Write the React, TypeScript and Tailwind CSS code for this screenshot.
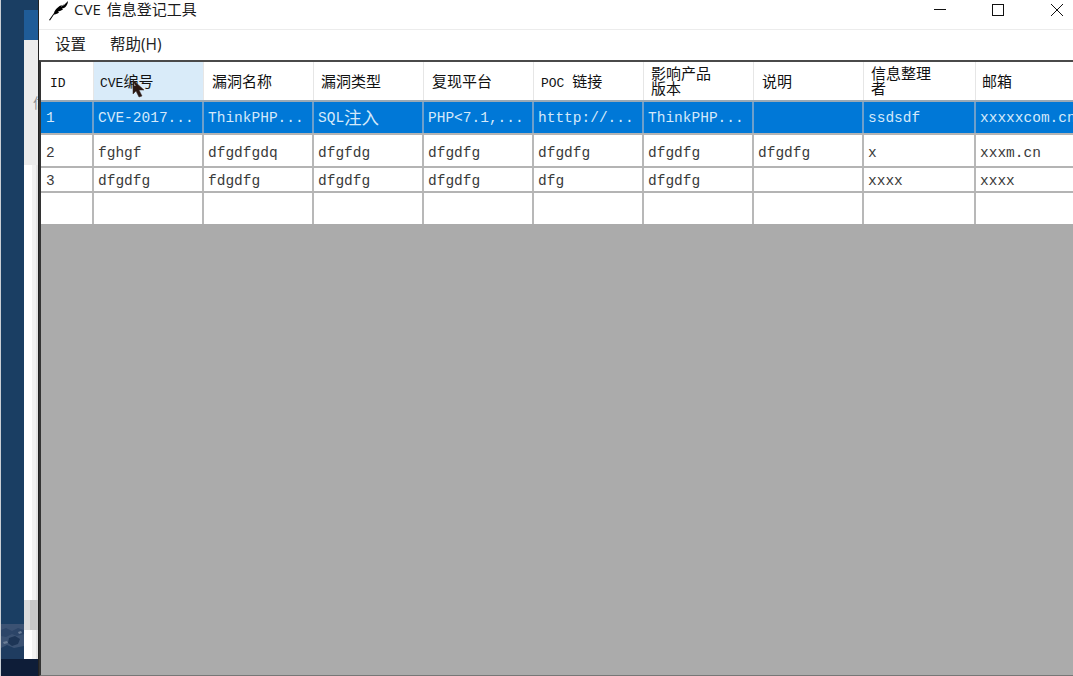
const MONO = "font-['Liberation_Mono','Noto_Sans_CJK_SC',monospace]";
const UI = "font-['Open_Sans','Noto_Sans_CJK_SC',sans-serif]";
const COLS = "grid grid-cols-[53px_repeat(7,110px)_112px_110px]";

// header cells: latin part is narrow mono, cjk part is larger
const HEADERS: { latin?: string; lines: string[]; pad: string }[] = [
  { latin: "ID", lines: [], pad: "pl-[9px]" },
  { latin: "CVE", lines: ["编号"], pad: "pl-[6px]" },
  { lines: ["漏洞名称"], pad: "pl-[8px]" },
  { lines: ["漏洞类型"], pad: "pl-[7px]" },
  { lines: ["复现平台"], pad: "pl-[8px]" },
  { latin: "POC ", lines: ["链接"], pad: "pl-[7px]" },
  { lines: ["影响产品", "版本"], pad: "pl-[7px]" },
  { lines: ["说明"], pad: "pl-[8px]" },
  { lines: ["信息整理", "者"], pad: "pl-[7px]" },
  { lines: ["邮箱"], pad: "pl-[6px]" },
];

const ROWS: { height: string; pad: string; cells: string[] }[] = [
  {
    height: "h-[33px]",
    pad: "pt-[3px]",
    cells: ["1", "CVE-2017...", "ThinkPHP...", "SQL注入", "PHP<7.1,...", "htttp://...", "ThinkPHP...", "", "ssdsdf", "xxxxxcom.cn"],
  },
  {
    height: "h-[33px]",
    pad: "pt-[6px]",
    cells: ["2", "fghgf", "dfgdfgdq", "dfgfdg", "dfgdfg", "dfgdfg", "dfgdfg", "dfgdfg", "x", "xxxm.cn"],
  },
  {
    height: "h-[25px]",
    pad: "pt-[5px]",
    cells: ["3", "dfgdfg", "fdgdfg", "dfgdfg", "dfgdfg", "dfg", "dfgdfg", "", "xxxx", "xxxx"],
  },
  { height: "h-[33px]", pad: "", cells: ["", "", "", "", "", "", "", "", "", ""] },
];

function BackgroundStrip() {
  return (
    <div className="flex h-full w-[38px] shrink-0 border-l border-[#c9ced4] bg-[#1a3f66]">
      <div className="w-[23px] flex flex-col">
        <div className="h-[624px] bg-[#1a3e63]" />
        <svg width="23" height="35" viewBox="0 0 23 35" className="block">
          <rect width="23" height="35" fill="#3b5273" />
          <path d="M0 6l5-2 6 3 6-3 6 2v4l-7 2-5-2-6 3-5-1z" fill="#2c4568" />
          <path d="M8 14l6-2 5 3-2 5-6 2-4-3z" fill="#1d3556" />
          <path d="M0 24l6-3 7 3 10-2v13H0z" fill="#1f3c60" />
          <path d="M2 18l4-1 1 2-4 1zM17 8l3-1 1 2-3 1z" fill="#6b7d96" />
        </svg>
        <div className="flex-1 bg-[#0e1d38]" />
      </div>
      <div className="flex w-[14px] flex-col">
        <div className="h-[10px] bg-[#1a3e63]" />
        <div className="h-[30px] bg-[#1f5c98]" />
        <div className="flex h-[125px] items-center overflow-hidden bg-[#ececec] pl-[9px]">
          <span className={`${UI} text-[14px] text-[#8a8f94]`}>信</span>
        </div>
        <div className="flex h-[435px] bg-white">
          <div className="w-[8px]" />
          <div className="w-[4px] bg-[#f2f2f2]" />
          <div className="w-[2px] bg-[#e3e3e3]" />
        </div>
        <div className="flex h-[30px]">
          <div className="w-[6px] bg-[#dcdcdc]" />
          <div className="w-[8px] bg-[#c8c8c8]" />
        </div>
        <div className="flex h-[29px] bg-white">
          <div className="w-[8px]" />
          <div className="w-[4px] bg-[#f2f2f2]" />
          <div className="w-[2px] bg-[#e3e3e3]" />
        </div>
        <div className="flex-1 bg-[#0e1d38]" />
      </div>
    </div>
  );
}

function TitleBar() {
  return (
    <div className="flex h-[30px] shrink-0 border-b border-[#ececec] bg-white">
      <svg width="20" height="20" viewBox="0 0 20 20" className="ml-[10px] mt-px block">
        <path d="M0 19L5 12C6 8 10 5 13 4L12 6 15 3 14 5 19 0C19 3 17 6 15 7L13 7.5 14 8.5 11 10 9 10.5 10 11.5C8 13 6 13.5 5 13.5L1 19.5z" fill="#000" />
      </svg>
      <div className={`${UI} ml-[5px] text-[15px] leading-[19px] text-[#1a1a1a]`}>
        <span className="mr-[2px]">CVE</span> 信息登记工具
      </div>
      <div className="ml-auto flex h-[19px] items-center">
        <svg width="12" height="12" viewBox="0 0 12 12" className="mr-[46px]">
          <path d="M0 5.5h12" stroke="#111" fill="none" />
        </svg>
        <svg width="12" height="12" viewBox="0 0 12 12" className="mr-[47px]">
          <rect x="0.5" y="0.5" width="11" height="11" stroke="#111" fill="none" />
        </svg>
        <svg width="12" height="12" viewBox="0 0 12 12" className="mr-[10px]">
          <path d="M0 0l12 12M12 0L0 12" stroke="#111" fill="none" />
        </svg>
      </div>
    </div>
  );
}

function MenuBar() {
  return (
    <div className={`${UI} flex h-[30px] shrink-0 items-center gap-[24px] bg-white pl-[16px] text-[15.5px] text-[#222]`}>
      <span>设置</span>
      <span>帮助(H)</span>
    </div>
  );
}

function HeaderRow() {
  return (
    <div className={`${COLS} h-[38px] bg-white`}>
      {HEADERS.map((h, i) => (
        <div
          key={i}
          className={`flex flex-col justify-center border-r border-[#e6e6e6] pt-[4px] text-[15px] leading-[15px] text-[#111] ${h.pad} ${MONO} ${
            i === 1 ? "bg-[#d9ebf9]" : ""
          }`}
        >
          {h.latin ? (
            <div className="whitespace-pre">
              <span className="text-[13px]">{h.latin}</span>
              {h.lines[0]}
            </div>
          ) : (
            h.lines.map((l) => <div key={l}>{l}</div>)
          )}
        </div>
      ))}
    </div>
  );
}

function splitCell(text: string) {
  // cjk glyphs sit in a bigger size than the latin ones
  return text.split(/([\u4e00-\u9fff]+)/).map((part, i) =>
    i % 2 === 1 ? (
      <span key={i} className="text-[17.5px]">
        {part}
      </span>
    ) : (
      part
    ),
  );
}

function Table() {
  return (
    <div className="flex-1 overflow-hidden border-t-2 border-l-2 border-b border-[#4a4a4a] border-l-[#333] border-b-[#777] bg-[#ababab]">
      <HeaderRow />
      {ROWS.map((row, r) => (
        <div
          key={r}
          className={`${COLS} ${row.height} border-t-2 border-[#b4b4b4] ${
            r === 0 ? "bg-[#0078d7] text-[#d4e9fa]" : "bg-white text-[#3a3a3a]"
          } ${r === 0 ? "border-t-[#9aa9b5]" : ""} ${MONO} text-[14.5px]`}
        >
          {row.cells.map((c, i) => (
            <div
              key={i}
              className={`flex items-center overflow-hidden whitespace-nowrap border-r-2 ${
                i === 0 ? "pl-[5px]" : "pl-[4px]"
              } ${row.pad} ${r === 0 ? "border-[#6d9fcb]" : "border-[#b8b8b8]"}`}
            >
              {splitCell(c)}
            </div>
          ))}
        </div>
      ))}
    </div>
  );
}

export default function App() {
  return (
    <div className="relative flex h-[676px] w-[1073px] overflow-hidden bg-white">
      <BackgroundStrip />
      <div className="flex min-w-0 flex-1 flex-col border-l border-[#222]">
        <TitleBar />
        <MenuBar />
        <Table />
      </div>
      {/* mouse pointer caught over the header */}
      <svg width="14" height="18" viewBox="0 0 14 18" className="absolute left-[132px] top-[80px]">
        <path d="M1 0v14l3-3 3 6 3-1-3-6h5z" fill="#2a1712" stroke="#3b2a26" strokeWidth="0.5" />
        <path d="M2 3l0 3 2 0z" fill="#8a8a8a" />
      </svg>
    </div>
  );
}
